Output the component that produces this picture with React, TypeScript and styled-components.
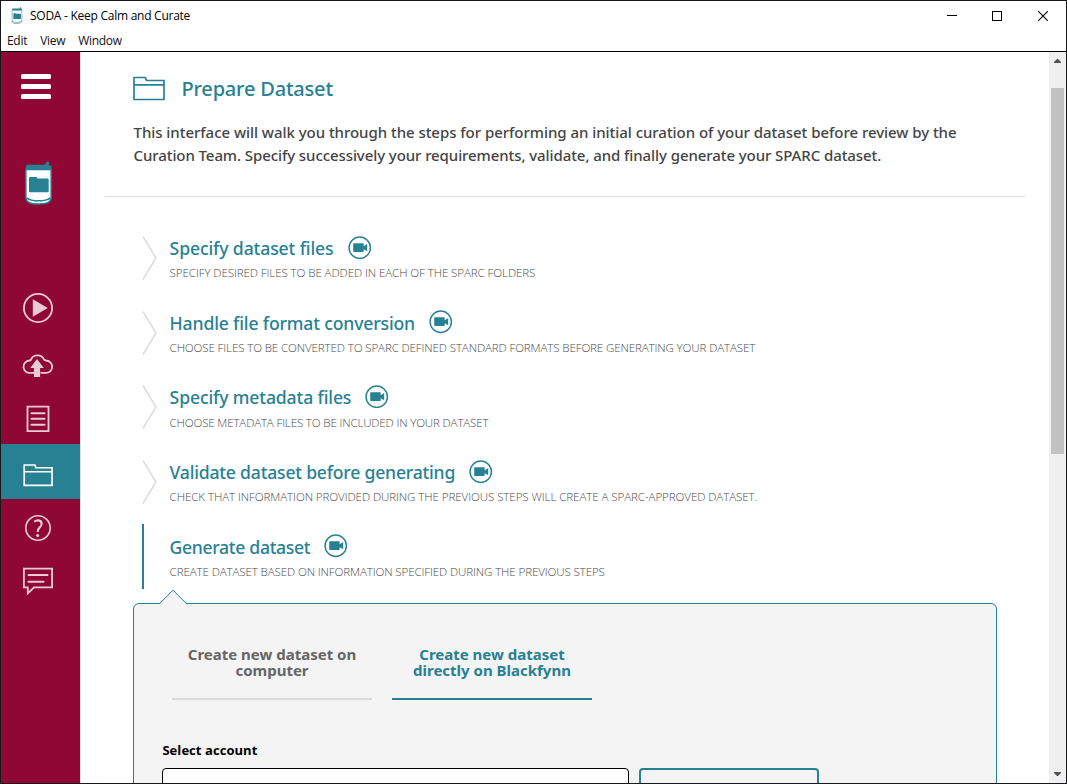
import React from "react";
import styled, { createGlobalStyle } from "styled-components";

const teal = "#278192";
const maroon = "#8f0735";

const GlobalStyle = createGlobalStyle`
  *, *::before, *::after { box-sizing: border-box; }
  body { margin: 0; background: #fff; overflow: hidden; }
`;

const Window = styled.div`
  display: flex;
  flex-direction: column;
  width: 1067px;
  height: 784px;
  border: 1px solid #18181a;
  background: #fff;
  overflow: hidden;
  font-family: "Noto Sans", "Open Sans", sans-serif;
`;

const TitleBar = styled.header`
  display: flex;
  align-items: center;
  flex: none;
  height: 29px;
  padding-left: 8px;
`;

const AppIcon = styled.svg`
  width: 16px;
  height: 17px;
  margin-top: -1px;
`;

const AppTitle = styled.div`
  flex: 1;
  margin-left: 5px;
  font: 400 12px/16px "Open Sans", sans-serif;
  letter-spacing: -0.26px;
  color: #000;
`;

const WindowControl = styled.button`
  display: flex;
  align-items: center;
  justify-content: center;
  width: 46px;
  height: 29px;
  padding: 0;
  border: 0;
  background: none;
`;

const MenuBar = styled.nav`
  display: flex;
  flex: none;
  height: 22px;
  padding: 2px 0 0 6px;
  gap: 13px;
  border-bottom: 1px solid #000;
`;

const MenuItem = styled.span`
  font: 400 12px/18px "Open Sans", sans-serif;
  letter-spacing: -0.3px;
  color: #111;
`;

const Body = styled.div`
  display: flex;
  flex: 1;
  min-height: 0;
`;

const Sidebar = styled.aside`
  display: flex;
  flex-direction: column;
  align-items: center;
  flex: none;
  width: 80px;
  border-right: 1px solid #ddd;
  background: ${maroon};
`;

const Hamburger = styled.button`
  display: flex;
  flex-direction: column;
  gap: 5px;
  margin: 22px 0 0 -9px;
  padding: 0;
  border: 0;
  background: none;
`;

const Bar = styled.span`
  width: 30px;
  height: 5px;
  border-radius: 1.5px;
  background: #fff;
`;

const Logo = styled.svg`
  flex: none;
  width: 29px;
  height: 44px;
  margin: 62px 0 74px -5px;
`;

const NavItem = styled.a<{ $height: number; $active?: boolean }>`
  display: flex;
  align-items: center;
  justify-content: center;
  flex: none;
  width: 100%;
  height: ${(p) => p.$height}px;
  padding-right: 5px;
  color: ${(p) => (p.$active ? "#fff" : "#e9cbd6")};
  background: ${(p) => (p.$active ? teal : "transparent")};
`;

const NavIcon = styled.svg`
  width: 32px;
  height: 32px;
  fill: none;
  stroke: currentColor;
  stroke-width: 1.8;
`;

const Main = styled.main`
  flex: 1;
  min-width: 0;
  padding: 0 24px;
  overflow: hidden;
`;

const Intro = styled.section`
  height: 145px;
  padding: 21px 28px 0;
  border-bottom: 1px solid #dedede;
`;

const PageHeading = styled.div`
  display: flex;
  align-items: center;
  height: 32px;
  gap: 16.5px;
`;

const FolderIcon = styled.svg`
  width: 32px;
  height: 25px;
  margin-top: -2px;
  fill: none;
  stroke: ${teal};
  stroke-width: 1.7;
`;

const PageTitle = styled.h1`
  margin: 0;
  font-size: 20px;
  font-weight: 500;
  line-height: 32px;
  letter-spacing: -0.2px;
  color: ${teal};
`;

const Lead = styled.p`
  margin: 16px 0 0 0.5px;
  font-size: 15px;
  font-weight: 500;
  line-height: 23px;
  white-space: nowrap;
  color: #444;
`;

const LeadLine = styled.span<{ $track: number }>`
  display: block;
  letter-spacing: ${(p) => p.$track}px;
`;

const Steps = styled.div`
  display: flex;
  flex-direction: column;
  padding: 28px 0 0 37px;
`;

const Step = styled.section`
  display: flex;
  height: 74.7px;
`;

const Marker = styled.div`
  flex: none;
  width: 27.6px;
`;

const Chevron = styled.svg`
  display: block;
  width: 15px;
  height: 46px;
  margin-top: 10px;
  fill: none;
  stroke: #dcdcdc;
  stroke-width: 1.5;
`;

const ActiveBar = styled.div`
  width: 2px;
  height: 65px;
  background: ${teal};
`;

const StepTitle = styled.h2<{ $track: number }>`
  display: flex;
  align-items: center;
  gap: 14.2px;
  height: 24px;
  margin: 11px 0 0;
  font-size: 17.6px;
  font-weight: 500;
  line-height: 24px;
  letter-spacing: ${(p) => p.$track}px;
  white-space: nowrap;
  color: ${teal};
`;

const VideoIcon = styled.svg`
  width: 23.5px;
  height: 23.5px;
  margin-top: -1.5px;
`;

const StepNote = styled.p<{ $track: number }>`
  margin: 5.2px 0 0;
  font: 300 11.6px/16px "Open Sans", sans-serif;
  letter-spacing: ${(p) => p.$track}px;
  text-transform: uppercase;
  white-space: nowrap;
  color: #4a4a4a;
`;

const Panel = styled.section`
  position: relative;
  width: 864px;
  height: 260px;
  margin: 5px 0 0 28px;
  padding: 42px 28px 0;
  border: 1px solid ${teal};
  border-radius: 6px;
  background: #f4f4f4;
`;

const PanelPointer = styled.svg`
  position: absolute;
  top: -15px;
  left: 24px;
  width: 30px;
  height: 16px;
`;

const Tabs = styled.div`
  display: flex;
  gap: 20px;
  padding-left: 10px;
`;

const Tab = styled.button<{ $active?: boolean }>`
  width: 200px;
  height: 54px;
  padding: 0 0 20px;
  border: 0;
  border-bottom: 2px solid ${(p) => (p.$active ? teal : "#dadada")};
  background: none;
  font: 700 15px/16px "Noto Sans", sans-serif;
  text-align: center;
  color: ${(p) => (p.$active ? teal : "#666")};
`;

const FieldLabel = styled.label`
  display: block;
  margin: 41px 0 0 0.4px;
  font: 700 13px/18px "Open Sans", sans-serif;
  letter-spacing: 0.06px;
  color: #000;
`;

const FieldRow = styled.div`
  display: flex;
  gap: 10px;
  margin-top: 9px;
`;

const AccountSelect = styled.div`
  width: 467px;
  height: 36px;
  border: 1px solid #000;
  border-radius: 4px;
  background: #fff;
`;

const AccountButton = styled.div`
  width: 180px;
  height: 36px;
  border: 2px solid ${teal};
  border-radius: 4px;
`;

const Scrollbar = styled.div`
  display: flex;
  flex-direction: column;
  align-items: center;
  flex: none;
  width: 17px;
  padding: 7px 0;
  background: #f0f0f0;
`;

const ScrollArrow = styled.svg`
  flex: none;
  width: 7px;
  height: 4px;
`;

const Thumb = styled.div`
  width: 13px;
  height: 366px;
  margin: 25px 0 auto;
  background: #c1c1c1;
`;

const Can = () => (
  <>
    <path d="M1.4 8.5H26.6V37Q26.6 43 14 43T1.4 37Z" fill="#fff" stroke={teal} strokeWidth="1.4" />
    <path d="M1.4 8.2V5.5Q1.4 3.8 3.4 3.8H20.5L21.5 1.5Q23.5-.2 25 1.8 25 3 23.6 3.9 27.1 4 27.1 5.8V8.2Z" fill={teal} />
    <path d="M4.5 17.2Q4.5 16 5.7 16H11.5Q12.6 16 12.8 17.4H23Q24.2 17.4 24.2 18.6V30.2Q24.2 31.2 23 31.2H5.7Q4.5 31.2 4.5 30.2Z" fill={teal} />
    <path d="M2 36.8Q6 39.8 14 39.8T26 36.8" fill="none" stroke={teal} strokeWidth="1.6" />
  </>
);

const folderPath = "M1 23.5V1.5H12.5L13.5 4.5H31V23.5ZM1 8.8H31";

const Video = () => (
  <VideoIcon viewBox="0 0 24 24">
    <circle cx="12" cy="12" r="10.9" fill="none" stroke={teal} strokeWidth="1.5" />
    <path d="M6 7.5H15.3Q16 7.5 16 8.2V10.4L19.6 8.2V15.6L16 13.5V15.7Q16 16.4 15.3 16.4H6Q5.3 16.4 5.3 15.7V8.2Q5.3 7.5 6 7.5Z" fill={teal} />
  </VideoIcon>
);

const steps = [
  { title: "Specify dataset files", track: -0.12, note: "Specify desired files to be added in each of the SPARC folders", noteTrack: -0.105 },
  { title: "Handle file format conversion", track: -0.155, note: "Choose files to be converted to SPARC defined standard formats before generating your dataset", noteTrack: -0.139 },
  { title: "Specify metadata files", track: -0.13, note: "Choose metadata files to be included in your dataset", noteTrack: -0.173 },
  { title: "Validate dataset before generating", track: -0.21, note: "Check that information provided during the previous steps will create a SPARC-approved dataset.", noteTrack: -0.095 },
  { title: "Generate dataset", track: -0.32, note: "Create dataset based on information specified during the previous steps", noteTrack: -0.13, active: true },
];

export default function App() {
  return (
    <Window>
      <GlobalStyle />
      <TitleBar>
        <AppIcon viewBox="-2 0 32 44"><Can /></AppIcon>
        <AppTitle>SODA - Keep Calm and Curate</AppTitle>
        <WindowControl aria-label="Minimize">
          <svg width="12" height="11"><path d="M2 5.5H12" stroke="#000" /></svg>
        </WindowControl>
        <WindowControl aria-label="Maximize">
          <svg width="10" height="10"><rect x=".5" y=".5" width="9" height="9" fill="none" stroke="#000" /></svg>
        </WindowControl>
        <WindowControl aria-label="Close">
          <svg width="10" height="10"><path d="M0 0L10 10M10 0L0 10" stroke="#000" strokeWidth="1.1" /></svg>
        </WindowControl>
      </TitleBar>
      <MenuBar>
        <MenuItem>Edit</MenuItem>
        <MenuItem>View</MenuItem>
        <MenuItem>Window</MenuItem>
      </MenuBar>
      <Body>
        <Sidebar>
          <Hamburger aria-label="Toggle menu"><Bar /><Bar /><Bar /></Hamburger>
          <Logo viewBox="0 0 28 44"><Can /></Logo>
          <NavItem $height={58}>
            <NavIcon viewBox="0 0 32 32">
              <circle cx="16" cy="16" r="14.1" />
              <path d="M10.8 7.2L25.8 16L10.8 24.8Z" fill="currentColor" stroke="none" />
            </NavIcon>
          </NavItem>
          <NavItem $height={56}>
            <NavIcon viewBox="0 -0.5 32 32">
              <path d="M12.5 23.4H8A6.2 6.2 0 0 1 7.4 11Q8.6 11 8.8 10.4A7.2 7.2 0 0 1 21.8 9.6Q22.3 10.8 24 11A6.2 6.2 0 0 1 24 23.4H18.5" />
              <path d="M15 9.5L21.8 18.6H18.1V27.5H11.9V18.6H8.2Z" fill="currentColor" stroke="none" />
            </NavIcon>
          </NavItem>
          <NavItem $height={51}>
            <NavIcon viewBox="0 0 32 32">
              <path d="M5.5 3.7H26.5V28.2H5.5Z" />
              <path d="M9.5 10.3H22.5M9.5 15.7H22.5M9.5 21.8H22.5" strokeLinecap="round" strokeWidth="2" />
            </NavIcon>
          </NavItem>
          <NavItem $height={55} $active>
            <NavIcon viewBox="-1.4 -8.2 34.5 34.5"><path d={folderPath} /></NavIcon>
          </NavItem>
          <NavItem $height={57}>
            <NavIcon viewBox="0 0 32 32">
              <circle cx="16" cy="16" r="12.2" strokeWidth="1.6" />
              <path d="M12.2 9.8Q14 8.2 16.3 8.4Q19.8 8.7 19.6 12Q19.5 14 17.6 15.6Q15.7 17.2 15.7 20" strokeWidth="2.1" />
              <circle cx="15.7" cy="23.4" r="1.5" fill="currentColor" stroke="none" />
            </NavIcon>
          </NavItem>
          <NavItem $height={48}>
            <NavIcon viewBox="0 -0.6 32 32">
              <path d="M1.9 4H30.1V22.8H12L5.8 28.8V22.8H1.9Z" />
              <path d="M6.5 10.4H25.5M6.5 17.2H21.5" strokeLinecap="round" strokeWidth="2" />
            </NavIcon>
          </NavItem>
        </Sidebar>
        <Main>
          <Intro>
            <PageHeading>
              <FolderIcon viewBox="0 0 32 25"><path d={folderPath} /></FolderIcon>
              <PageTitle>Prepare Dataset</PageTitle>
            </PageHeading>
            <Lead>
              <LeadLine $track={-0.042}>
                This interface will walk you through the steps for performing an initial curation of your dataset before review by the
              </LeadLine>
              <LeadLine $track={-0.085}>
                Curation Team. Specify successively your requirements, validate, and finally generate your SPARC dataset.
              </LeadLine>
            </Lead>
          </Intro>
          <Steps>
            {steps.map((s) => (
              <Step key={s.title}>
                <Marker>
                  {s.active ? <ActiveBar /> : (
                    <Chevron viewBox="0 0 15 46"><path d="M1 1.5L14 23L1 44.5" /></Chevron>
                  )}
                </Marker>
                <div>
                  <StepTitle $track={s.track}>{s.title}<Video /></StepTitle>
                  <StepNote $track={s.noteTrack}>{s.note}</StepNote>
                </div>
              </Step>
            ))}
          </Steps>
          <Panel>
            <PanelPointer viewBox="0 0 30 16">
              <path d="M1 15L15 1L29 15V16H1Z" fill="#f4f4f4" />
              <path d="M1 15.2L15 1.2L29 15.2" fill="none" stroke={teal} />
            </PanelPointer>
            <Tabs>
              <Tab>Create new dataset on computer</Tab>
              <Tab $active>Create new dataset directly on Blackfynn</Tab>
            </Tabs>
            <FieldLabel>Select account</FieldLabel>
            <FieldRow>
              <AccountSelect />
              <AccountButton />
            </FieldRow>
          </Panel>
        </Main>
        <Scrollbar>
          <ScrollArrow viewBox="0 0 7 4"><path d="M0 4V3L3 0H4L7 3V4Z" fill="#505050" /></ScrollArrow>
          <Thumb />
          <ScrollArrow viewBox="0 0 7 4"><path d="M0 0V1L3 4H4L7 1V0Z" fill="#505050" /></ScrollArrow>
        </Scrollbar>
      </Body>
    </Window>
  );
}
